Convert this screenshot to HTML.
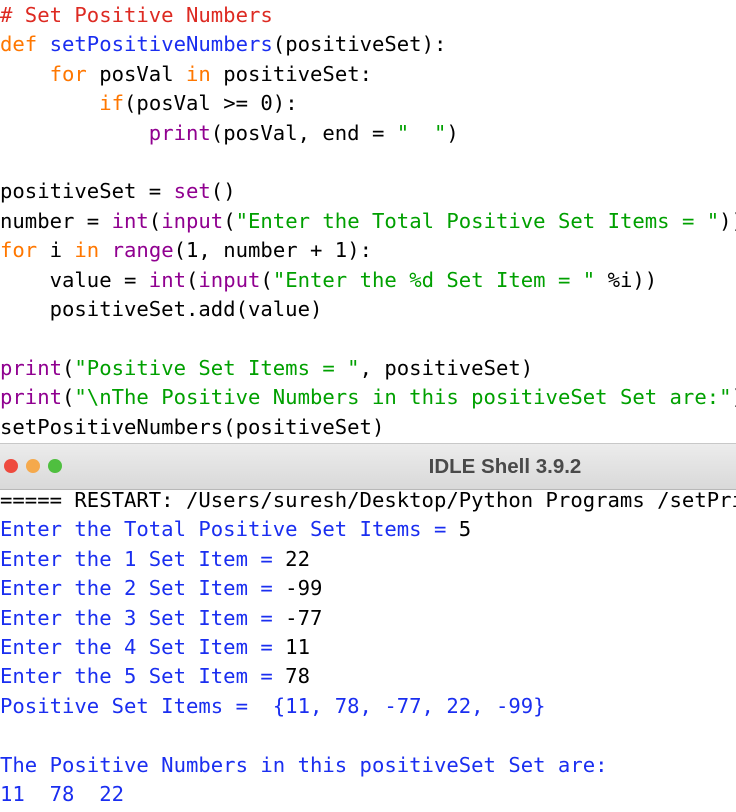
<!DOCTYPE html>
<html><head><meta charset="utf-8"><style>
html,body{margin:0;padding:0;background:#fff;width:736px;height:812px;overflow:hidden;position:relative}
pre{margin:0;position:absolute;left:0;width:736px;overflow:hidden;font-family:"DejaVu Sans Mono","Liberation Mono",monospace;font-size:20.6px;line-height:29.4px;color:#000;white-space:pre}
.c{color:#dd2a22}.k{color:#ff7700}.f{color:#1a2ef0}.s{color:#00a000}.b{color:#900090}.o{color:#1a2ef0}
#bar{position:absolute;left:0;top:443px;width:736px;height:45px;background:linear-gradient(#ececec,#d9d9d9);border-top:1px solid #c8c8c8;border-bottom:1px solid #b8b8b8;z-index:2}
.d{position:absolute;top:15px;width:14px;height:14px;border-radius:50%}
#t{position:absolute;left:0;width:1010px;text-align:center;top:11px;font:bold 20.5px "Liberation Sans",sans-serif;color:#4a4a4a}
</style></head><body>
<pre style="top:1px"><span class="c"># Set Positive Numbers</span>
<span class="k">def</span> <span class="f">setPositiveNumbers</span>(positiveSet):
    <span class="k">for</span> posVal <span class="k">in</span> positiveSet:
        <span class="k">if</span>(posVal &gt;= 0):
            <span class="b">print</span>(posVal, end = <span class="s">"  "</span>)

positiveSet = <span class="b">set</span>()
number = <span class="b">int</span>(<span class="b">input</span>(<span class="s">"Enter the Total Positive Set Items = "</span>))
<span class="k">for</span> i <span class="k">in</span> <span class="b">range</span>(1, number + 1):
    value = <span class="b">int</span>(<span class="b">input</span>(<span class="s">"Enter the %d Set Item = "</span> %i))
    positiveSet.add(value)

<span class="b">print</span>(<span class="s">"Positive Set Items = "</span>, positiveSet)
<span class="b">print</span>(<span class="s">"\nThe Positive Numbers in this positiveSet Set are:"</span>)
setPositiveNumbers(positiveSet)</pre>
<div id="bar"><div class="d" style="left:4px;background:#ee4a3e"></div><div class="d" style="left:26px;background:#f5a94c"></div><div class="d" style="left:48px;background:#4fbf3f"></div><div id="t">IDLE Shell 3.9.2</div></div>
<pre style="top:486px">===== RESTART: /Users/suresh/Desktop/Python Programs /setPrintPositive.py
<span class="o">Enter the Total Positive Set Items = </span>5
<span class="o">Enter the 1 Set Item = </span>22
<span class="o">Enter the 2 Set Item = </span>-99
<span class="o">Enter the 3 Set Item = </span>-77
<span class="o">Enter the 4 Set Item = </span>11
<span class="o">Enter the 5 Set Item = </span>78
<span class="o">Positive Set Items =  {11, 78, -77, 22, -99}</span>

<span class="o">The Positive Numbers in this positiveSet Set are:</span>
<span class="o">11  78  22</span></pre>
</body></html>
